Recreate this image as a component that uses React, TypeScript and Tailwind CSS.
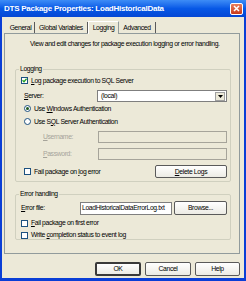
const ui = "font-['Liberation_Sans',Arial,sans-serif] text-[6.8px] leading-[8px] tracking-[-0.35px] text-black";

function U({ children }: { children: string }) {
  return <span className="underline underline-offset-[1px]">{children}</span>;
}

function CheckBox({ checked = false }: { checked?: boolean }) {
  return (
    <span className="w-[7px] h-[7px] shrink-0 border border-[#1c5180] bg-white flex items-center justify-center">
      {checked && (
        <svg width="5" height="5" viewBox="0 0 5 5">
          <path d="M0.5 2.3 L2 3.8 L4.6 0.8" stroke="#21a121" strokeWidth="1.3" fill="none" />
        </svg>
      )}
    </span>
  );
}

function Radio({ checked = false }: { checked?: boolean }) {
  return (
    <span className="w-[7px] h-[7px] shrink-0 rounded-full border border-[#1c5180] bg-white flex items-center justify-center">
      {checked && <span className="w-[3px] h-[3px] rounded-full bg-[#1f5a1f]" />}
    </span>
  );
}

function Button({ label, wide = '', isDefault = false }: { label: React.ReactNode; wide?: string; isDefault?: boolean }) {
  return (
    <div
      className={`${wide} h-full flex items-center justify-center rounded-[2px] bg-gradient-to-b from-white to-[#ecebe4] ${
        isDefault ? 'border-2 border-[#3a3a3a]' : 'border border-[#5a5a5a]'
      }`}
    >
      {label}
    </div>
  );
}

const tabs = [
  { name: 'General', w: 'w-[28px]' },
  { name: 'Global Variables', w: 'w-[53px]' },
  { name: 'Logging', w: 'w-[31px]' },
  { name: 'Advanced', w: 'w-[37px]' },
];

export default function App() {
  return (
    <div className={`w-[246px] h-[281px] flex flex-col bg-[#0a3ed6] ${ui}`}>
      {/* title bar */}
      <div className="h-[17px] shrink-0 flex items-center justify-between pl-[4px] pr-[3px] bg-gradient-to-b from-[#3d8cf6] via-[#0758e6] to-[#0547d4]">
        <span className="text-white font-bold text-[8px] leading-[10px] tracking-[-0.25px]">DTS Package Properties: LoadHistoricalData</span>
        <div className="w-[13px] h-[12px] rounded-[2px] border border-white bg-gradient-to-b from-[#e97d5a] to-[#c8391a] flex items-center justify-center">
          <svg width="7" height="7" viewBox="0 0 7 7">
            <path d="M1 1 L6 6 M6 1 L1 6" stroke="white" strokeWidth="1.5" />
          </svg>
        </div>
      </div>

      {/* client area */}
      <div className="flex-1 mx-[2px] mb-[3px] bg-[#ece9d8] flex flex-col">
        {/* tabs */}
        <div className="mt-[5px] ml-[5px] h-[11px] flex items-end relative z-10">
          {tabs.map((t) =>
            t.name === 'Logging' ? (
              <div
                key={t.name}
                className={`${t.w} h-[13px] mb-[-1px] flex items-center justify-center bg-[#ece9d8] border-t border-l border-white border-r border-r-[#919b9c]`}
              >
                {t.name}
              </div>
            ) : (
              <div key={t.name} className={`${t.w} h-[11px] flex items-center justify-center border-r border-[#5a5a5a]`}>
                {t.name}
              </div>
            )
          )}
        </div>

        {/* tab panel */}
        <div className="ml-[2px] mr-[4px] h-[221px] border border-[#919b9c] flex flex-col pl-[10px] pr-[8px]">
          <div className="pt-[6px] pl-[15px] whitespace-nowrap">View and edit changes for package execution logging or error handling.</div>

          {/* Logging group */}
          <fieldset className="mt-[17px] border border-[#d0d0bf] rounded-[2px] px-0 pb-[3px] pt-0 flex flex-col">
            <legend className="ml-[3px] px-[1px]">Logging</legend>
            <div className="mt-[3px] h-[9px] pl-[5px] flex items-center gap-[3px]">
              <CheckBox checked />
              <span>
                <U>L</U>og package execution to SQL Server
              </span>
            </div>
            <div className="mt-[5px] h-[12px] pl-[8px] pr-[3px] flex items-center">
              <span className="w-[73px]">
                <U>S</U>erver:
              </span>
              <div className="flex-1 h-full bg-white border border-[#7f7f7f] flex items-center pl-[3px] pr-[1px]">
                <span className="flex-1">(local)</span>
                <div className="w-[10px] h-[9px] bg-[#ece9d8] border border-[#a0a0a0] flex items-center justify-center">
                  <svg width="5" height="3" viewBox="0 0 5 3">
                    <path d="M0 0 H5 L2.5 3 Z" fill="black" />
                  </svg>
                </div>
              </div>
            </div>
            <div className="mt-[2px] h-[9px] pl-[8px] flex items-center gap-[3px]">
              <Radio checked />
              <span>
                Use <U>W</U>indows Authentication
              </span>
            </div>
            <div className="mt-[4px] h-[9px] pl-[8px] flex items-center gap-[3px]">
              <Radio />
              <span>
                Use S<U>Q</U>L Server Authentication
              </span>
            </div>
            <div className="mt-[5px] h-[12px] pl-[27px] pr-[3px] flex items-center text-[#a6a49a]">
              <span className="w-[55px]">
                <U>U</U>sername:
              </span>
              <div className="flex-1 h-full border border-[#a6a49a] bg-[#ece9d8]" />
            </div>
            <div className="mt-[5px] h-[12px] pl-[27px] pr-[3px] flex items-center text-[#a6a49a]">
              <span className="w-[55px]">
                <U>P</U>assword:
              </span>
              <div className="flex-1 h-full border border-[#a6a49a] bg-[#ece9d8]" />
            </div>
            <div className="mt-[5px] h-[13px] pl-[8px] pr-[3px] flex items-center">
              <CheckBox />
              <span className="ml-[3px] flex-1">
                Fail package on <U>l</U>og error
              </span>
              <Button
                wide="w-[72px]"
                label={
                  <span>
                    <U>D</U>elete Logs
                  </span>
                }
              />
            </div>
          </fieldset>

          {/* Error handling group */}
          <fieldset className="mt-[8px] border border-[#d0d0bf] rounded-[2px] px-0 pb-0 pt-0 flex flex-col">
            <legend className="ml-[3px] px-[1px]">Error handling</legend>
            <div className="mt-[3px] h-[14px] pl-[5px] pr-[3px] flex items-center">
              <span className="w-[59px]">
                <U>E</U>rror file:
              </span>
              <div className="w-[92px] h-[13px] bg-white border border-[#7f7f7f] flex items-center pl-[1px] overflow-hidden whitespace-nowrap">
                LoadHistoricalDataErrorLog.txt
              </div>
              <div className="ml-[2px] flex-1 h-full">
                <Button wide="w-full" label="Browse..." />
              </div>
            </div>
            <div className="mt-[4px] h-[8px] pl-[5px] flex items-center gap-[3px]">
              <CheckBox />
              <span>
                <U>F</U>ail package on first error
              </span>
            </div>
            <div className="mt-[4px] h-[8px] pl-[5px] flex items-center gap-[3px]">
              <CheckBox />
              <span>
                Write <U>c</U>ompletion status to event log
              </span>
            </div>
          </fieldset>
        </div>

        {/* dialog buttons */}
        <div className="mt-[8px] h-[14px] pr-[4px] flex justify-end gap-[4px]">
          <Button wide="w-[46px]" label="OK" isDefault />
          <Button wide="w-[46px]" label="Cancel" />
          <Button wide="w-[45px]" label="Help" />
        </div>
      </div>
    </div>
  );
}
